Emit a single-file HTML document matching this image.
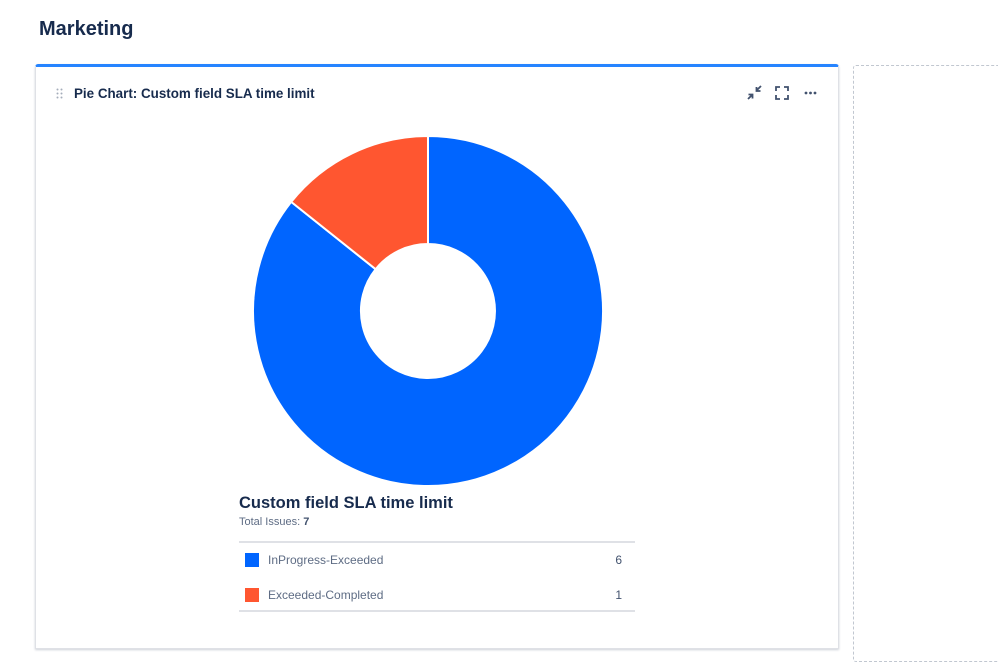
<!DOCTYPE html>
<html><head><style>
body{margin:0;width:998px;height:668px;background:#fff;font-family:"Liberation Sans",sans-serif;position:relative;overflow:hidden;color:#172b4d}
h1{position:absolute;left:39px;top:18px;margin:0;font-size:20px;font-weight:600}
.card{position:absolute;left:35px;top:64px;width:802px;height:581px;border:1px solid #dfe1e6;border-top:3px solid #2684ff;border-radius:3px 3px 0 0;box-shadow:0 1px 2px rgba(9,30,66,.2)}
.dash{position:absolute;left:853px;top:65px;width:150px;height:595px;border:1px dashed #c1c7d0;border-radius:3px}
.t{position:absolute;left:74px;top:86px;font-size:13.4px;font-weight:600}
.lt{position:absolute;left:239px;top:494px;font-size:16.5px;font-weight:600}
.ls{position:absolute;left:239px;top:516px;font-size:11px;color:#5e6c84}
.tbl{position:absolute;left:239px;top:541px;width:396px;height:67px;border-top:2px solid #dfe1e6;border-bottom:2px solid #dfe1e6}
.row{position:absolute;left:0;width:396px;height:20px;font-size:12px;color:#5e6c84}
.sw{position:absolute;left:6px;top:2px;width:14px;height:14px}
.row .n{position:absolute;left:29px;top:2px}
.row .v{position:absolute;right:13px;top:2px;color:#42526e}
</style></head><body>
<h1>Marketing</h1>
<div class="card"></div>
<div class="dash"></div>
<svg style="position:absolute;left:56px;top:88px" width="8" height="12" fill="#a5adba"><circle cx="1.5" cy="1.5" r="1"/><circle cx="5.5" cy="1.5" r="1"/><circle cx="1.5" cy="5.5" r="1"/><circle cx="5.5" cy="5.5" r="1"/><circle cx="1.5" cy="9.5" r="1"/><circle cx="5.5" cy="9.5" r="1"/></svg>
<div class="t">Pie Chart: Custom field SLA time limit</div>
<svg style="position:absolute;left:740px;top:82px" width="84" height="22" viewBox="0 0 84 22" fill="none" stroke="#42526e" stroke-width="1.8">
<path d="M8 17l4.5-4.5M8.5 12.5h4v4M21 4l-4.5 4.5M16.5 5v4h4"/>
<path d="M36 9V5h4M44 5h4v4M48 13v4h-4M40 17h-4v-4"/>
<g fill="#42526e" stroke="none"><circle cx="66" cy="11" r="1.4"/><circle cx="70.5" cy="11" r="1.4"/><circle cx="75" cy="11" r="1.4"/></g>
</svg>
<svg style="position:absolute;left:0;top:0" width="998" height="668">
<path d="M428 136A175 175 0 1 1 291.2 201.9L375.6 269.2A67 67 0 1 0 428 244Z" fill="#0065ff" stroke="#fff" stroke-width="2"/>
<path d="M428 136L428 244A67 67 0 0 0 375.6 269.2L291.2 201.9A175 175 0 0 1 428 136Z" fill="#ff5630" stroke="#fff" stroke-width="2"/>
</svg>
<div class="lt">Custom field SLA time limit</div>
<div class="ls">Total Issues: <b style="color:#42526e">7</b></div>
<div class="tbl">
<div class="row" style="top:8px"><div class="sw" style="background:#0065ff"></div><span class="n">InProgress-Exceeded</span><span class="v">6</span></div>
<div class="row" style="top:43px"><div class="sw" style="background:#ff5630"></div><span class="n">Exceeded-Completed</span><span class="v">1</span></div>
</div>
</body></html>
